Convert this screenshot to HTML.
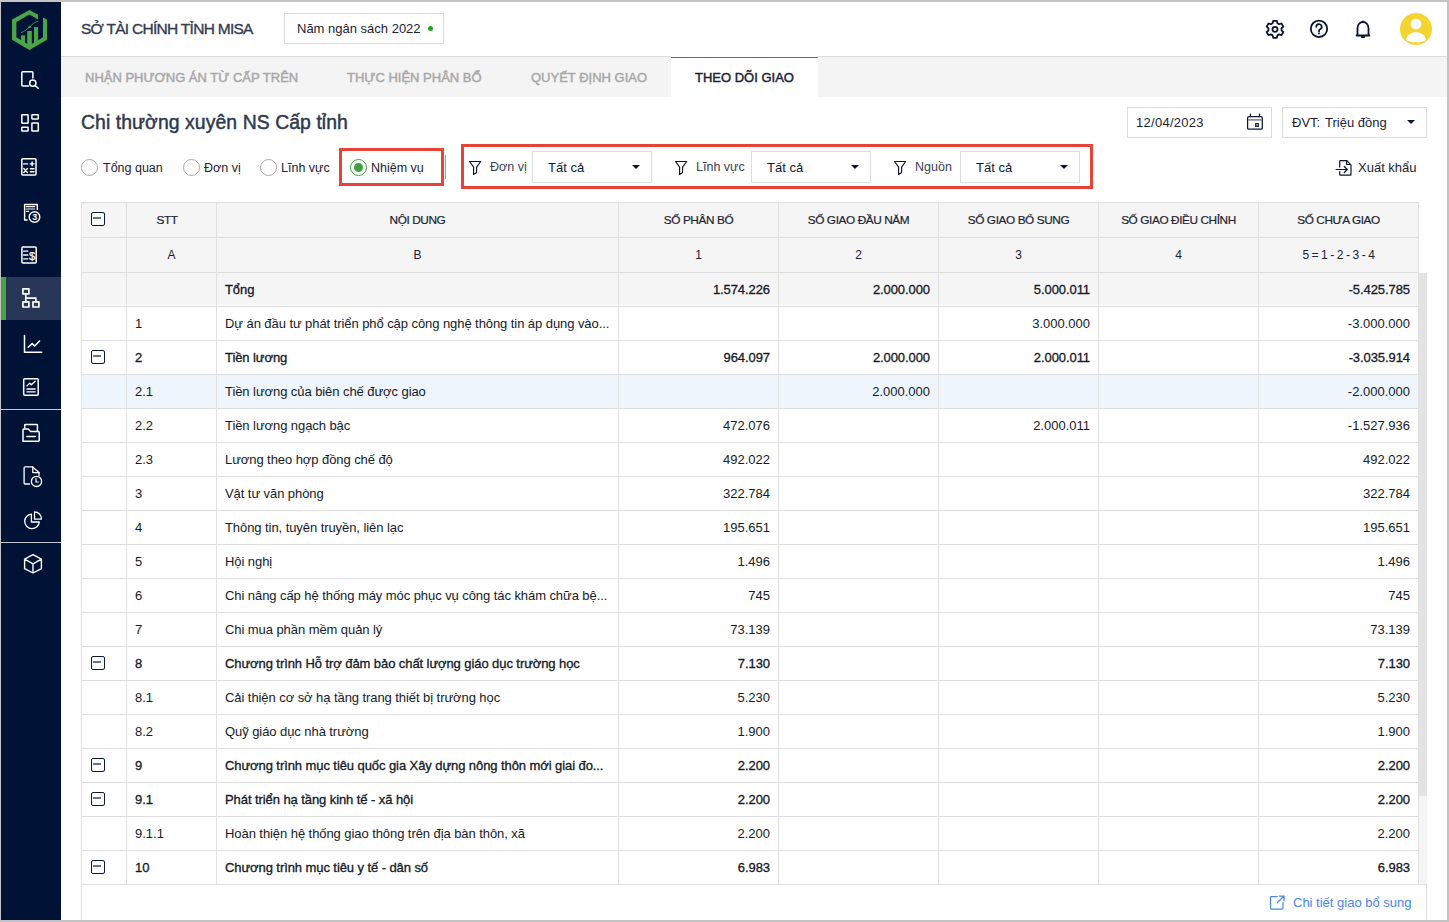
<!DOCTYPE html>
<html><head><meta charset="utf-8">
<style>
*{box-sizing:border-box;margin:0;padding:0}
html,body{width:1449px;height:922px;overflow:hidden}
body{background:#c4c4c4;font-family:"Liberation Sans",sans-serif;color:#1c2233;position:relative}
div,span,svg{position:absolute}
.t{white-space:nowrap}
#main{left:61px;top:2px;width:1386px;height:918px;background:#fff}
#side{left:1px;top:2px;width:60px;height:918px;background:#001337}
.act{left:1px;top:277px;width:60px;height:43px;background:#283658}
.actbar{left:1px;top:277px;width:5px;height:43px;background:#48a345}
.sep{left:1px;width:60px;height:1px;background:#c5c9d2}
#hdrline{left:61px;top:56px;width:1386px;height:1px;background:#dcdcdc}
#tabs{left:61px;top:57px;width:1386px;height:40px;background:#f4f4f4}
.tab{top:57px;height:40px;font-size:13px;color:#a8a8a8;line-height:42px;-webkit-text-stroke:0.45px #a8a8a8}
.tabon{left:671px;top:56px;width:147px;height:41px;background:#fff;border-top:1px solid #fff}
.tabonline{left:671px;top:57px;width:147px;height:1px;background:#1ca41c}
.box{border:1px solid #dcdcdc;background:#fff}
.red{border:3px solid #e6443b}
.radio{width:17px;height:17px;border:1px solid #a9a9a9;border-radius:50%;background:#fff}
.lbl{font-size:12.5px;color:#1c2233;line-height:18px}
.flbl{font-size:12.5px;color:#3a4256;line-height:16px}
.sel{border:1px solid #dcdcdc;background:#fff;width:120px;height:32px}
.sel span{left:15px;top:0;line-height:32px;font-size:13px;color:#101a33}
.caret{width:0;height:0;border-left:4.5px solid transparent;border-right:4.5px solid transparent;border-top:4.5px solid #0b1430}
/* table */
.hl{left:81px;width:1338px;height:1px;background:#dedede}
.vl{top:202px;width:1px;height:683px;background:#e1e1e1}
.rowbg{left:82px;width:1336px}
.th{height:34px;line-height:34px;text-align:center;font-size:11.8px;letter-spacing:-0.4px;color:#1c2233;-webkit-text-stroke:0.2px #1c2233;white-space:nowrap}
.th2{height:34px;line-height:34px;text-align:center;font-size:12px;color:#1c2233;white-space:nowrap}
.td{height:33px;line-height:33px;font-size:13px;color:#151a28;white-space:nowrap}
.td.b{-webkit-text-stroke:0.32px #151a28;letter-spacing:-0.08px}
.num{text-align:right}
.ell{overflow:hidden}
.cb{left:91px;width:14px;height:14px;border:1.6px solid #0e1a3a;border-radius:2px;background:#fff}
.cb i{position:absolute;left:1.4px;top:4.4px;width:8px;height:2px;background:#6d7284}
</style></head><body>
<div id="main"></div>
<div id="side"></div>
<div class="act"></div>
<div class="actbar"></div>
<div class="sep" style="top:409px"></div>
<div class="sep" style="top:542px"></div>

<!-- logo -->
<svg style="left:0;top:0" width="61" height="56" viewBox="0 0 61 56">
  <path fill="#4aa546" d="M38.1,14.7 L29.4,9.9 L12,19.6 L12,39.7 L29.4,50 L47,39.7 L47,19.6 L43,17.4 L43,37.3 L29.4,45.2 L16.4,37.3 L16.4,22 L29.4,14.6 L38.1,19.5 Z"/>
  <rect fill="#4aa546" x="21" y="35.4" width="4" height="9"/>
  <rect fill="#4aa546" x="27.2" y="31" width="4.6" height="15"/>
  <rect fill="#4aa546" x="34" y="27" width="4.1" height="16"/>
  <path fill="none" stroke="#4aa546" stroke-width="0.9" d="M21,32.6 C25,31.5 27,29 29.6,27 C32,24.5 34.5,22 38,21.3"/>
  <circle fill="#4aa546" cx="29.6" cy="27" r="1.3"/>
</svg>

<!-- sidebar icons -->
<svg style="left:0;top:60px" width="61" height="520" viewBox="0 60 61 520" fill="none" stroke="#fff" stroke-width="1.5" stroke-linecap="round" stroke-linejoin="round">
  <!-- 1 doc search -->
  <path d="M28.5,86.1 H22.8 a1,1 0 0 1 -1,-1 V72.7 a1,1 0 0 1 1,-1 H31.9 a1,1 0 0 1 1,1 V78"/>
  <circle cx="32.8" cy="83.2" r="3.1"/>
  <path d="M35.1,85.5 L38.2,88.3"/>
  <!-- 2 dashboard -->
  <rect x="21.8" y="114.8" width="6.3" height="8.4" rx="0.4"/>
  <rect x="21.8" y="127.2" width="6.3" height="3.9" rx="0.4"/>
  <rect x="31.9" y="114.8" width="6.4" height="4.1" rx="0.4"/>
  <rect x="31.9" y="123.1" width="6.4" height="8" rx="0.4"/>
  <!-- 3 calculator -->
  <rect x="21.8" y="158.8" width="14.2" height="16.3" rx="1"/>
  <path d="M23.6,163.9 H27.5 M30.2,163.9 H34 M32.1,162 V165.8 M23.8,168.5 L27.4,172.5 M27.4,168.5 L23.8,172.5 M30.4,168.8 H34 M30.4,171.7 H34" stroke-width="1.4"/>
  <!-- 4 doc 3 -->
  <path d="M27.6,220 H24.6 V204.5 H37.3 V209.9" stroke-width="1.4" stroke-linecap="butt"/>
  <path d="M26.4,206.6 H34.7 M26.4,209 H34.7 M26.4,211.4 H28.6" stroke-width="1.2"/>
  <circle cx="34.5" cy="217" r="5.3" stroke-width="1.4"/>
  <text x="34.7" y="220.2" font-family="Liberation Sans" font-size="9" font-weight="bold" text-anchor="middle" fill="#fff" stroke="none">3</text>
  <!-- 5 $ doc -->
  <rect x="21.9" y="247" width="14.3" height="16.1" rx="1"/>
  <path d="M23.6,251.2 H27.8 M23.6,255 H27.8 M23.6,258.8 H27.8" stroke-width="1.3"/>
  <text x="32.1" y="259.6" font-family="Liberation Sans" font-size="11" text-anchor="middle" fill="#fff" stroke="#fff" stroke-width="0.25">$</text>
  <!-- 6 hierarchy -->
  <rect x="22.9" y="288.9" width="6" height="4.9" stroke-width="1.7"/>
  <rect x="22.9" y="301.9" width="6" height="5.1" stroke-width="1.7"/>
  <rect x="33" y="301.9" width="5.9" height="5.1" stroke-width="1.7"/>
  <path d="M25.8,293.8 V301.9 M25.8,298.1 H35.9 V301.9" stroke-width="1.6"/>
  <!-- 7 line chart -->
  <path d="M24.5,335.5 V352.3 H41.7"/>
  <path d="M28.2,347.2 L32.2,343.6 L34.7,346 L39.6,341"/>
  <!-- 8 report -->
  <rect x="23.7" y="378.7" width="14.5" height="16.6" rx="1"/>
  <path d="M27,385.8 L29.8,383.3 L31.3,384.8 L35.2,381.2 M26.9,389 H35.2 M26.9,391.8 H35.2" stroke-width="1.3"/>
  <!-- 9 archive -->
  <path d="M24.7,428 V425.2 a0.8,0.8 0 0 1 0.8,-0.8 H36.6 a0.8,0.8 0 0 1 0.8,0.8 V431"/>
  <path d="M23,441.2 V429.9 a0.8,0.8 0 0 1 0.8,-0.8 H28.2 L30.6,431.6 H38.4 a0.8,0.8 0 0 1 0.8,0.8 V440.4 a0.8,0.8 0 0 1 -0.8,0.8 Z"/>
  <path d="M26.9,436.6 H35.2"/>
  <!-- 10 doc clock -->
  <path d="M29.5,484 H25 a0.9,0.9 0 0 1 -0.9,-0.9 V467.8 a0.9,0.9 0 0 1 0.9,-0.9 H32.6 L39,472.6 V475.5" stroke-width="1.3"/>
  <path d="M32.8,467 V472.6 H39" stroke-width="1.3"/>
  <circle cx="36.5" cy="481.4" r="5.1" stroke-width="1.3"/>
  <path d="M36,478.6 V482 H38.4" stroke-width="1.2"/>
  <!-- 11 pie -->
  <path d="M31.4,514.1 A7.3,7.3 0 1 0 39.3,522 H31.4 Z" stroke-width="1.3"/>
  <path d="M34.5,511.8 A7,7 0 0 1 41.4,519.1 H34.5 Z" stroke-width="1.3"/>
  <!-- 12 cube -->
  <path d="M33,554.6 L41.4,559.2 V568.7 L33,573 L24.6,568.7 V559.2 Z M24.6,559.2 L33,563.8 L41.4,559.2 M33,563.8 V573" stroke-width="1.4"/>
</svg>

<div id="hdrline"></div>
<div id="tabs"></div>
<div class="tabon"></div>
<div class="tabonline"></div>
<div class="t tab" style="left:85px">NHẬN PHƯƠNG ÁN TỪ CẤP TRÊN</div>
<div class="t tab" style="left:347px">THỰC HIỆN PHÂN BỔ</div>
<div class="t tab" style="left:531px">QUYẾT ĐỊNH GIAO</div>
<div class="t tab" style="left:695px;color:#1c2233;-webkit-text-stroke:0.45px #1c2233">THEO DÕI GIAO</div>

<!-- header -->
<div class="t" style="left:81px;top:18px;font-size:15.5px;line-height:22px;color:#343c52;letter-spacing:-0.72px;-webkit-text-stroke:0.35px #343c52">SỞ TÀI CHÍNH TỈNH MISA</div>
<div class="box" style="left:284px;top:13px;width:160px;height:31px"></div>
<div class="t" style="left:297px;top:21px;font-size:13px;line-height:16px;color:#1c2233">Năm ngân sách 2022</div>
<div style="left:428px;top:26px;width:5px;height:5px;border-radius:50%;background:#20a520"></div>

<svg style="left:1262px;top:16px" width="180" height="34" viewBox="1262 16 180 34" fill="none" stroke="#0b1430" stroke-width="1.8">
  <!-- gear -->
  <path d="M1273.2,20.8 h3.6 l0.6,2.4 l1.7,1 l2.4,-0.7 l1.8,3.1 l-1.8,1.7 v2 l1.8,1.7 l-1.8,3.1 l-2.4,-0.7 l-1.7,1 l-0.6,2.4 h-3.6 l-0.6,-2.4 l-1.7,-1 l-2.4,0.7 l-1.8,-3.1 l1.8,-1.7 v-2 l-1.8,-1.7 l1.8,-3.1 l2.4,0.7 l1.7,-1 Z" stroke-linejoin="round"/>
  <circle cx="1275" cy="29.3" r="2.5"/>
  <!-- help -->
  <circle cx="1319" cy="28.8" r="8.2"/>
  <path d="M1316.3,26.8 a2.7,2.7 0 1 1 3.8,2.5 q-1.1,0.5 -1.1,1.8 v0.6" stroke-linecap="round"/>
  <circle cx="1319" cy="33.6" r="0.9" fill="#0b1430" stroke="none"/>
  <!-- bell -->
  <path d="M1357.5,35.3 V28 a5.5,6 0 0 1 11,0 V35.3" />
  <path d="M1356.6,35.5 H1369.4" stroke-linecap="round"/>
  <circle cx="1363" cy="21.3" r="0.9" fill="#0b1430" stroke="none"/>
  <path d="M1361.8,37 H1364.2" stroke-linecap="round"/>
</svg>
<svg style="left:1400px;top:13px" width="32" height="32" viewBox="0 0 32 32">
  <circle cx="16" cy="16" r="16" fill="#f4d430"/>
  <circle cx="16" cy="11" r="5.3" fill="#fff"/>
  <path d="M6,27 C7.5,16.6 24.5,16.6 26,27 Q16,32.2 6,27 Z" fill="#fff"/>
</svg>

<!-- toolbar -->
<div class="t" style="left:81px;top:110px;font-size:19.4px;line-height:24px;color:#2e3850;letter-spacing:0.07px;-webkit-text-stroke:0.45px #2e3850">Chi thường xuyên NS Cấp tỉnh</div>

<div class="radio" style="left:81px;top:159px"></div>
<div class="t lbl" style="left:103px;top:159px">Tổng quan</div>
<div class="radio" style="left:183px;top:159px"></div>
<div class="t lbl" style="left:204px;top:159px">Đơn vị</div>
<div class="radio" style="left:260px;top:159px"></div>
<div class="t lbl" style="left:281px;top:159px">Lĩnh vực</div>
<div class="red" style="left:339px;top:148px;width:105px;height:38px"></div>
<div class="radio" style="left:350px;top:159px;border-color:#3ea33e"></div>
<div style="left:354px;top:163px;width:9.2px;height:9.2px;border-radius:50%;background:#43a043"></div>
<div class="t lbl" style="left:371px;top:159px">Nhiệm vụ</div>
<div style="left:445px;top:155px;width:1px;height:24px;background:#a0a0a0"></div>

<div class="red" style="left:461px;top:144px;width:632px;height:45px"></div>
<svg style="left:460px;top:150px" width="640" height="36" viewBox="460 150 640 36" fill="none" stroke="#0b1430" stroke-width="1.15" stroke-linejoin="round">
  <path d="M469.5,161.5 H480.7 L476.6,167.2 V172.6 L473.6,174.4 V167.2 Z"/>
  <path d="M675.5,161.5 H686.7 L682.6,167.2 V172.6 L679.6,174.4 V167.2 Z"/>
  <path d="M894.5,161.5 H905.7 L901.6,167.2 V172.6 L898.6,174.4 V167.2 Z"/>
</svg>
<div class="t flbl" style="left:490px;top:159px">Đơn vị</div>
<div class="sel" style="left:532px;top:151px"><span class="t">Tất cả</span></div>
<div class="caret" style="left:632px;top:165px"></div>
<div class="t flbl" style="left:696px;top:159px">Lĩnh vực</div>
<div class="sel" style="left:751px;top:151px"><span class="t">Tất cả</span></div>
<div class="caret" style="left:851px;top:165px"></div>
<div class="t flbl" style="left:915px;top:159px">Nguồn</div>
<div class="sel" style="left:960px;top:151px"><span class="t">Tất cả</span></div>
<div class="caret" style="left:1060px;top:165px"></div>

<!-- date, dvt -->
<div class="box" style="left:1127px;top:107px;width:145px;height:31px"></div>
<div class="t" style="left:1136px;top:115px;font-size:13px;letter-spacing:0.28px;line-height:16px;color:#1c2233">12/04/2023</div>
<svg style="left:1245px;top:112px" width="20" height="20" viewBox="1245 112 20 20" fill="none" stroke="#0b1430" stroke-width="1.25">
  <rect x="1247.6" y="116.6" width="14.7" height="12.6" rx="1.3"/>
  <path d="M1248.2,119.9 H1261.7" stroke="#6e7487" stroke-width="1.4"/>
  <path d="M1250.5,114.2 V116.6 M1259.5,114.2 V116.6" stroke-linecap="round"/>
  <rect x="1255.7" y="123.7" width="2.6" height="2.6" stroke-width="1.2"/>
</svg>
<div class="box" style="left:1282px;top:107px;width:145px;height:31px"></div>
<div class="t" style="left:1292px;top:115px;font-size:13px;line-height:16px;color:#1c2233">ĐVT:</div><div class="t" style="left:1325px;top:115px;font-size:13px;line-height:16px;color:#1c2233">Triệu đồng</div>
<div class="caret" style="left:1406.5px;top:120px"></div>

<!-- export -->
<svg style="left:1334px;top:158px" width="20" height="20" viewBox="1334 158 20 20" fill="none" stroke="#0b1430" stroke-width="1.2" stroke-linejoin="round">
  <path d="M1339.7,167.4 V161.4 a0.8,0.8 0 0 1 0.8,-0.8 H1346.8 L1351,164.8 V174.4 a0.8,0.8 0 0 1 -0.8,0.8 H1340.5 a0.8,0.8 0 0 1 -0.8,-0.8 V171.3"/>
  <path d="M1346.6,160.8 V164.5 H1350.8"/>
  <path d="M1336.2,169.5 H1347.3 M1344.3,166.5 L1347.3,169.5 L1344.3,172.5" stroke-linecap="round"/>
</svg>
<div class="t" style="left:1358px;top:160px;font-size:13px;line-height:16px;color:#1c2233">Xuất khẩu</div>

<!-- table container -->
<div style="left:81px;top:884px;width:1346px;height:36px;border:1px solid #e1e1e1;border-bottom:none;background:#fff"></div>
<div style="left:1419px;top:273px;width:8px;height:611px;background:#f5f5f5"></div>
<div style="left:1419px;top:273px;width:8px;height:523px;background:#e3e3e3"></div>
<div class="rowbg" style="top:203px;height:102px;background:#f5f5f5"></div>
<div class="th" style="left:127px;top:203px;width:89px;padding-right:9px;">STT</div>
<div class="th2" style="left:127px;top:238px;width:89px;">A</div>
<div class="th" style="left:217px;top:203px;width:401px;">NỘI DUNG</div>
<div class="th2" style="left:217px;top:238px;width:401px;">B</div>
<div class="th" style="left:619px;top:203px;width:159px;">SỐ PHÂN BỔ</div>
<div class="th2" style="left:619px;top:238px;width:159px;">1</div>
<div class="th" style="left:779px;top:203px;width:159px;">SỐ GIAO ĐẦU NĂM</div>
<div class="th2" style="left:779px;top:238px;width:159px;">2</div>
<div class="th" style="left:939px;top:203px;width:159px;">SỐ GIAO BỔ SUNG</div>
<div class="th2" style="left:939px;top:238px;width:159px;">3</div>
<div class="th" style="left:1099px;top:203px;width:159px;">SỐ GIAO ĐIỀU CHỈNH</div>
<div class="th2" style="left:1099px;top:238px;width:159px;">4</div>
<div class="th" style="left:1259px;top:203px;width:159px;">SỐ CHƯA GIAO</div>
<div class="th2" style="left:1259px;top:238px;width:159px;letter-spacing:-0.4px;">5 = 1 - 2 - 3 - 4</div>
<div class="cb" style="top:212px"><i></i></div>
<div class="td b" style="left:225px;top:273px;width:385px">Tổng</div>
<div class="td b num" style="left:619px;top:273px;width:151px">1.574.226</div>
<div class="td b num" style="left:779px;top:273px;width:151px">2.000.000</div>
<div class="td b num" style="left:939px;top:273px;width:151px">5.000.011</div>
<div class="td b num" style="left:1259px;top:273px;width:151px">-5.425.785</div>
<div class="td" style="left:135px;top:307px;width:80px">1</div>
<div class="td ell" style="left:225px;top:307px;width:388px;letter-spacing:-0.07px;">Dự án đầu tư phát triển phổ cập công nghệ thông tin áp dụng vào...</div>
<div class="td num" style="left:939px;top:307px;width:151px">3.000.000</div>
<div class="td num" style="left:1259px;top:307px;width:151px">-3.000.000</div>
<div class="cb" style="top:350px"><i></i></div>
<div class="td b" style="left:135px;top:341px;width:80px">2</div>
<div class="td b ell" style="left:225px;top:341px;width:388px;">Tiền lương</div>
<div class="td b num" style="left:619px;top:341px;width:151px">964.097</div>
<div class="td b num" style="left:779px;top:341px;width:151px">2.000.000</div>
<div class="td b num" style="left:939px;top:341px;width:151px">2.000.011</div>
<div class="td b num" style="left:1259px;top:341px;width:151px">-3.035.914</div>
<div class="rowbg" style="top:375px;height:33px;background:#eef5fc"></div>
<div class="td" style="left:135px;top:375px;width:80px">2.1</div>
<div class="td ell" style="left:225px;top:375px;width:388px;letter-spacing:-0.07px;">Tiền lương của biên chế được giao</div>
<div class="td num" style="left:779px;top:375px;width:151px">2.000.000</div>
<div class="td num" style="left:1259px;top:375px;width:151px">-2.000.000</div>
<div class="td" style="left:135px;top:409px;width:80px">2.2</div>
<div class="td ell" style="left:225px;top:409px;width:388px;letter-spacing:-0.07px;">Tiền lương ngạch bậc</div>
<div class="td num" style="left:619px;top:409px;width:151px">472.076</div>
<div class="td num" style="left:939px;top:409px;width:151px">2.000.011</div>
<div class="td num" style="left:1259px;top:409px;width:151px">-1.527.936</div>
<div class="td" style="left:135px;top:443px;width:80px">2.3</div>
<div class="td ell" style="left:225px;top:443px;width:388px;letter-spacing:-0.07px;">Lương theo hợp đồng chế độ</div>
<div class="td num" style="left:619px;top:443px;width:151px">492.022</div>
<div class="td num" style="left:1259px;top:443px;width:151px">492.022</div>
<div class="td" style="left:135px;top:477px;width:80px">3</div>
<div class="td ell" style="left:225px;top:477px;width:388px;letter-spacing:-0.07px;">Vật tư văn phòng</div>
<div class="td num" style="left:619px;top:477px;width:151px">322.784</div>
<div class="td num" style="left:1259px;top:477px;width:151px">322.784</div>
<div class="td" style="left:135px;top:511px;width:80px">4</div>
<div class="td ell" style="left:225px;top:511px;width:388px;letter-spacing:-0.07px;">Thông tin, tuyên truyền, liên lạc</div>
<div class="td num" style="left:619px;top:511px;width:151px">195.651</div>
<div class="td num" style="left:1259px;top:511px;width:151px">195.651</div>
<div class="td" style="left:135px;top:545px;width:80px">5</div>
<div class="td ell" style="left:225px;top:545px;width:388px;letter-spacing:-0.07px;">Hội nghị</div>
<div class="td num" style="left:619px;top:545px;width:151px">1.496</div>
<div class="td num" style="left:1259px;top:545px;width:151px">1.496</div>
<div class="td" style="left:135px;top:579px;width:80px">6</div>
<div class="td ell" style="left:225px;top:579px;width:388px;letter-spacing:-0.07px;">Chi nâng cấp hệ thống máy móc phục vụ công tác khám chữa bệ...</div>
<div class="td num" style="left:619px;top:579px;width:151px">745</div>
<div class="td num" style="left:1259px;top:579px;width:151px">745</div>
<div class="td" style="left:135px;top:613px;width:80px">7</div>
<div class="td ell" style="left:225px;top:613px;width:388px;letter-spacing:-0.07px;">Chi mua phần mềm quản lý</div>
<div class="td num" style="left:619px;top:613px;width:151px">73.139</div>
<div class="td num" style="left:1259px;top:613px;width:151px">73.139</div>
<div class="cb" style="top:656px"><i></i></div>
<div class="td b" style="left:135px;top:647px;width:80px">8</div>
<div class="td b ell" style="left:225px;top:647px;width:388px;">Chương trình Hỗ trợ đảm bảo chất lượng giáo dục trường học</div>
<div class="td b num" style="left:619px;top:647px;width:151px">7.130</div>
<div class="td b num" style="left:1259px;top:647px;width:151px">7.130</div>
<div class="td" style="left:135px;top:681px;width:80px">8.1</div>
<div class="td ell" style="left:225px;top:681px;width:388px;letter-spacing:-0.07px;">Cải thiện cơ sở hạ tầng trang thiết bị trường học</div>
<div class="td num" style="left:619px;top:681px;width:151px">5.230</div>
<div class="td num" style="left:1259px;top:681px;width:151px">5.230</div>
<div class="td" style="left:135px;top:715px;width:80px">8.2</div>
<div class="td ell" style="left:225px;top:715px;width:388px;letter-spacing:-0.07px;">Quỹ giáo dục nhà trường</div>
<div class="td num" style="left:619px;top:715px;width:151px">1.900</div>
<div class="td num" style="left:1259px;top:715px;width:151px">1.900</div>
<div class="cb" style="top:758px"><i></i></div>
<div class="td b" style="left:135px;top:749px;width:80px">9</div>
<div class="td b ell" style="left:225px;top:749px;width:388px;">Chương trình mục tiêu quốc gia Xây dựng nông thôn mới giai đo...</div>
<div class="td b num" style="left:619px;top:749px;width:151px">2.200</div>
<div class="td b num" style="left:1259px;top:749px;width:151px">2.200</div>
<div class="cb" style="top:792px"><i></i></div>
<div class="td b" style="left:135px;top:783px;width:80px">9.1</div>
<div class="td b ell" style="left:225px;top:783px;width:388px;">Phát triển hạ tầng kinh tế - xã hội</div>
<div class="td b num" style="left:619px;top:783px;width:151px">2.200</div>
<div class="td b num" style="left:1259px;top:783px;width:151px">2.200</div>
<div class="td" style="left:135px;top:817px;width:80px">9.1.1</div>
<div class="td ell" style="left:225px;top:817px;width:388px;letter-spacing:-0.07px;">Hoàn thiện hệ thống giao thông trên địa bàn thôn, xã</div>
<div class="td num" style="left:619px;top:817px;width:151px">2.200</div>
<div class="td num" style="left:1259px;top:817px;width:151px">2.200</div>
<div class="cb" style="top:860px"><i></i></div>
<div class="td b" style="left:135px;top:851px;width:80px">10</div>
<div class="td b ell" style="left:225px;top:851px;width:388px;">Chương trình mục tiêu y tế - dân số</div>
<div class="td b num" style="left:619px;top:851px;width:151px">6.983</div>
<div class="td b num" style="left:1259px;top:851px;width:151px">6.983</div>
<div class="hl" style="top:202px"></div>
<div class="hl" style="top:237px"></div>
<div class="hl" style="top:272px"></div>
<div class="hl" style="top:306px"></div>
<div class="hl" style="top:340px"></div>
<div class="hl" style="top:374px"></div>
<div class="hl" style="top:408px"></div>
<div class="hl" style="top:442px"></div>
<div class="hl" style="top:476px"></div>
<div class="hl" style="top:510px"></div>
<div class="hl" style="top:544px"></div>
<div class="hl" style="top:578px"></div>
<div class="hl" style="top:612px"></div>
<div class="hl" style="top:646px"></div>
<div class="hl" style="top:680px"></div>
<div class="hl" style="top:714px"></div>
<div class="hl" style="top:748px"></div>
<div class="hl" style="top:782px"></div>
<div class="hl" style="top:816px"></div>
<div class="hl" style="top:850px"></div>
<div class="hl" style="top:884px"></div>
<div class="vl" style="left:81px"></div>
<div class="vl" style="left:126px"></div>
<div class="vl" style="left:216px"></div>
<div class="vl" style="left:618px"></div>
<div class="vl" style="left:778px"></div>
<div class="vl" style="left:938px"></div>
<div class="vl" style="left:1098px"></div>
<div class="vl" style="left:1258px"></div>
<div class="vl" style="left:1418px"></div>

<!-- footer link -->
<svg style="left:1268px;top:893px" width="20" height="20" viewBox="1268 893 20 20" fill="none" stroke="#4a88ee" stroke-width="1.25" stroke-linecap="round" stroke-linejoin="round">
  <path d="M1277,896.5 H1271.3 a0.8,0.8 0 0 0 -0.8,0.8 V908.2 a0.8,0.8 0 0 0 0.8,0.8 H1282.2 a0.8,0.8 0 0 0 0.8,-0.8 V902.5"/>
  <path d="M1279.5,896 H1284 V900.5 M1284,896 L1277.5,902.5"/>
</svg>
<div class="t" style="left:1293px;top:895px;font-size:13px;line-height:16px;color:#4a84f0">Chi tiết giao bổ sung</div>
</body></html>
